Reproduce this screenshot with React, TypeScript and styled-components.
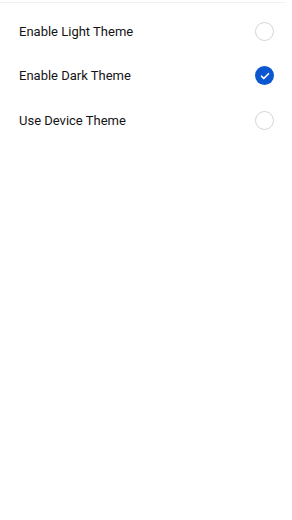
import { useState } from 'react';
import styled, { createGlobalStyle } from 'styled-components';

const GlobalStyle = createGlobalStyle`
  html, body {
    margin: 0;
    padding: 0;
    background: #fff;
  }
  body {
    font-family: Roboto, 'Noto Sans', sans-serif;
    -webkit-font-smoothing: antialiased;
  }
`;

const options = [
  { id: 'light', label: 'Enable Light Theme' },
  { id: 'dark', label: 'Enable Dark Theme' },
  { id: 'device', label: 'Use Device Theme' },
];

const App = () => {
  const [selected, setSelected] = useState('dark');

  return (
    <>
      <GlobalStyle />
      <Screen>
        <TopRule />
        <List>
          {options.map((o) => (
            <Row key={o.id} onClick={() => setSelected(o.id)}>
              <Label>{o.label}</Label>
              <Radio $checked={selected === o.id}>
                {selected === o.id && (
                  <svg width='12' height='12' viewBox='0 0 24 24'>
                    <path
                      d='M5 12.5l4.5 4.5L19 7.5'
                      fill='none'
                      stroke='#fff'
                      strokeWidth='3.4'
                      strokeLinecap='round'
                      strokeLinejoin='round'
                    />
                  </svg>
                )}
              </Radio>
            </Row>
          ))}
        </List>
      </Screen>
    </>
  );
};

const Screen = styled.div`
  width: 292px;
  height: 520px;
  background: #fff;
  display: flex;
  flex-direction: column;
`;

const TopRule = styled.div`
  height: 1px;
  margin: 2px 6px 0 0;
  background: #f1f1f1;
`;

const List = styled.div`
  display: flex;
  flex-direction: column;
  padding-top: 6px;
`;

const Row = styled.div`
  height: 44.5px;
  display: flex;
  align-items: center;
  justify-content: space-between;
  padding: 0 18px 0 19px;
  cursor: pointer;
`;

const Label = styled.span`
  font-size: 13px;
  color: #141414;
  letter-spacing: 0;
`;

const Radio = styled.span<{ $checked: boolean }>`
  width: 19px;
  height: 19px;
  box-sizing: border-box;
  border-radius: 50%;
  display: flex;
  align-items: center;
  justify-content: center;
  border: ${(p) => (p.$checked ? 'none' : '1.5px solid #d6d6d6')};
  background: ${(p) => (p.$checked ? '#0b57d0' : '#fff')};
`;

export default App;
